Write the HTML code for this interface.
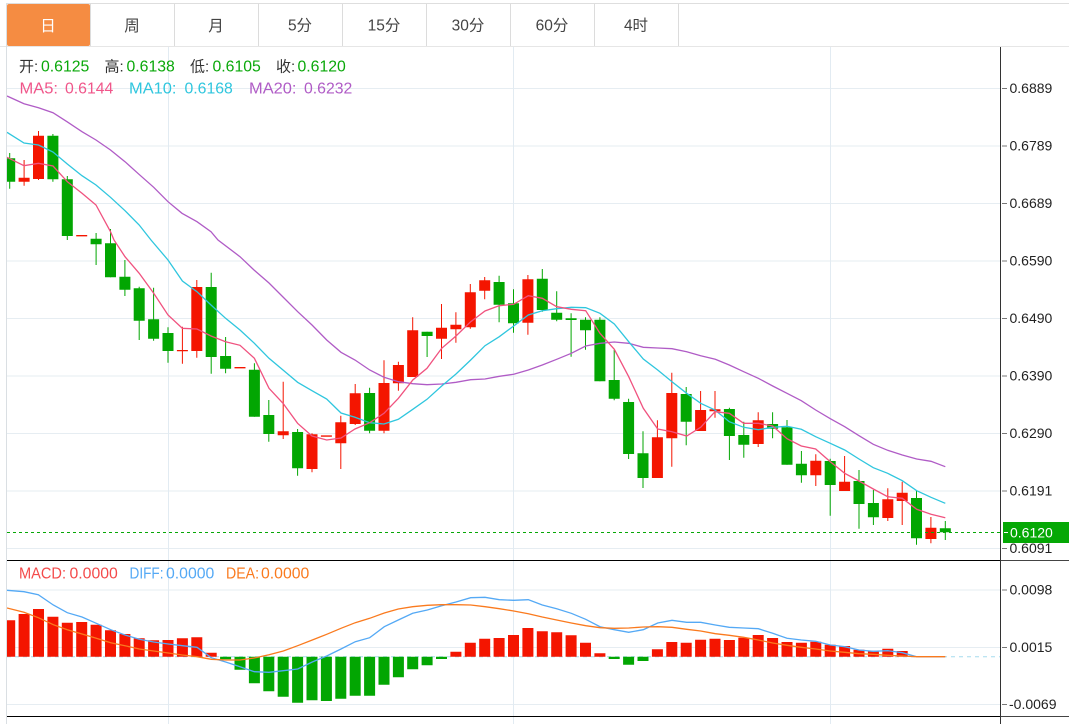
<!DOCTYPE html>
<html lang="zh"><head><meta charset="utf-8"><title>K线图</title>
<style>
html,body{margin:0;padding:0;background:#fff;width:1069px;height:724px;overflow:hidden}
svg{display:block;font-family:"Liberation Sans","Noto Sans CJK SC",sans-serif}
.tab{font-size:15.5px;fill:#444;text-anchor:middle}
.ax{font-size:14px;fill:#222}
.lg{font-size:15.8px}
</style></head><body>
<svg width="1069" height="724" viewBox="0 0 1069 724" xmlns="http://www.w3.org/2000/svg">
<defs><clipPath id="c"><rect x="7" y="47" width="993" height="677"/></clipPath></defs>
<!-- tabs -->
<path d="M6 3.5H1069" stroke="#dedede" fill="none"/>
<path d="M0 46.5H1069" stroke="#e6e6e6" fill="none"/>
<path d="M6.5 3V724" stroke="#dadfe3" fill="none"/>
<path d="M90.5 4V46M174.5 4V46M258.5 4V46M342.5 4V46M426.5 4V46M510.5 4V46M594.5 4V46M678.5 4V46" stroke="#dcdcdc" fill="none"/>
<rect x="7" y="4" width="83" height="42" rx="2" fill="#f58c42"/>
<text x="48" y="31" class="tab" style="fill:#fff">日</text>
<text x="132" y="31" class="tab">周</text>
<text x="216" y="31" class="tab">月</text>
<text x="300" y="30.5" class="tab">5分</text>
<text x="384" y="30.5" class="tab">15分</text>
<text x="468" y="30.5" class="tab">30分</text>
<text x="552" y="30.5" class="tab">60分</text>
<text x="636" y="30.5" class="tab">4时</text>
<!-- grid -->
<path d="M7 88.5H1000M7 146H1000M7 203.5H1000M7 261H1000M7 318.5H1000M7 376H1000M7 433.5H1000M7 491H1000M7 548.5H1000M7 590H1000M7 647.5H1000M7 704.5H1000" stroke="#e6edf2" fill="none"/>
<path d="M168.5 47V724M513.5 47V724M830.5 47V724" stroke="#e2ebf2" fill="none"/>
<path d="M7 656.7H1000" stroke="#a5dcee" stroke-dasharray="4 4" fill="none"/>
<g clip-path="url(#c)" fill="none">
<!-- candle wicks -->
<path stroke="#f41500" stroke-width="1" d="M24.1 160V185.7M38.5 131V180M182.4 326.7V363.7M196.8 280V357.7M283.2 381.7V439M312 433.3V472.3M340.8 415.7V469M355.2 384V425M384 360.3V433.3M398.4 361.7V390.7M412.7 317.3V377M441.5 304V359M455.9 312.3V342.7M470.3 284V328.7M484.7 277V299.3M527.9 275V334.7M657.4 420.3V478M671.8 372.7V466.7M700.6 391V431M715 391V417.7M758.2 412.3V447M815.8 454.3V486M844.6 456V491M887.8 488.3V521M902.2 481.7V525M930.9 517V543.3"/>
<path stroke="#02a602" stroke-width="1" d="M9.7 153V188.7M52.9 134V181.7M67.3 176V240M96.1 233V265M110.5 229V277.3M124.9 260V296M139.2 286.7V340M153.6 287.7V340.7M168 327.3V362.7M211.2 272.7V373.7M225.6 337V373.3M254.4 363.3V416.7M268.8 400V441.7M297.6 429V475.7M369.6 387.7V433.3M427.1 331.7V357M499.1 275.7V322.3M513.5 289.3V332.7M542.3 269V311.7M556.7 291.3V321.3M571.1 313.3V356.7M585.5 317.3V349.7M599.9 317.3V381.3M614.2 350V400.3M628.6 398.7V459M643 431.3V488M686.2 387V445.3M729.4 407.7V460M743.8 421.7V457.7M772.6 412.3V438.3M787 420V464.7M801.4 451V482.7M830.2 458.7V515.7M859 470V528.7M873.4 490V525M916.5 490V544.7M945.3 521V540"/>
<!-- candle bodies -->
<path stroke="#f41500" stroke-width="11" d="M24.1 177.7V181.7M38.5 135.7V179M81.7 235V236.4M182.4 350V351.3M196.8 287V351M240 367V368.4M283.2 431.3V435.3M312 434.3V469M326.4 435.4V436.8M340.8 422.3V443.3M355.2 393.3V424M384 383V430.7M398.4 365V383.3M412.7 330.3V377M441.5 327.7V338.7M455.9 324.7V329.3M470.3 292.3V327.3M484.7 280.3V290.7M527.9 279.3V322.7M657.4 437.3V478M671.8 393V438.3M700.6 410V431M715 409.3V411.3M758.2 420.3V444M815.8 460.7V475.3M844.6 481.7V491M887.8 499.3V518M902.2 492.7V501M930.9 527.7V539"/>
<path stroke="#02a602" stroke-width="11" d="M9.7 158.3V181.7M52.9 135.7V179.3M67.3 179.3V236M96.1 238.7V244.3M110.5 243.3V277.3M124.9 276.7V289.7M139.2 288.3V320.7M153.6 319.3V338.7M168 333V351M211.2 287V357M225.6 356V368.7M254.4 369.7V416.7M268.8 415V434M297.6 432V468.3M369.6 393V430.7M427.1 331.7V336M499.1 282V304.7M513.5 303.3V323.3M542.3 278.7V310M556.7 312.7V319.7M571.1 318.3V320M585.5 319.7V330.3M599.9 319.7V381.3M614.2 380V398.7M628.6 402V454M643 453.3V478M686.2 394V421.7M729.4 409V436M743.8 435V444.7M772.6 424V428.7M787 427.3V464.7M801.4 463.7V475.3M830.2 461V485M859 481V504M873.4 503V517.3M916.5 498V538.3M945.3 528.3V532.3"/>
<!-- MACD bars -->
<path stroke="#f41500" stroke-width="11" d="M9.7 656.7V620.3M24.1 656.7V614M38.5 656.7V609M52.9 656.7V616.7M67.3 656.7V622.7M81.7 656.7V622M96.1 656.7V624.7M110.5 656.7V630.3M124.9 656.7V634M139.2 656.7V638.3M153.6 656.7V640.3M168 656.7V640M182.4 656.7V638.3M196.8 656.7V637.3M211.2 656.7V652.7M455.9 656.7V651.7M470.3 656.7V642.7M484.7 656.7V638.7M499.1 656.7V638M513.5 656.7V635M527.9 656.7V628M542.3 656.7V631.3M556.7 656.7V632.3M571.1 656.7V635.3M585.5 656.7V642.7M599.9 656.7V653.3M657.4 656.7V649.3M671.8 656.7V642M686.2 656.7V642.7M700.6 656.7V639.7M715 656.7V638.8M729.4 656.7V640M743.8 656.7V637.7M758.2 656.7V635M772.6 656.7V638M787 656.7V642M801.4 656.7V642.7M815.8 656.7V641.7M830.2 656.7V644.7M844.6 656.7V646M859 656.7V649.7M873.4 656.7V650.7M887.8 656.7V648.7M902.2 656.7V651"/>
<path stroke="#02a602" stroke-width="11" d="M225.6 656.7V659.3M240 656.7V669.7M254.4 656.7V683.3M268.8 656.7V691.3M283.2 656.7V696.7M297.6 656.7V702.7M312 656.7V700.3M326.4 656.7V701M340.8 656.7V698.7M355.2 656.7V695.7M369.6 656.7V695.7M384 656.7V684.7M398.4 656.7V677.3M412.7 656.7V669.3M427.1 656.7V665.3M441.5 656.7V659M614.2 656.7V659M628.6 656.7V664.7M643 656.7V661"/>
<!-- MA20 -->
<polyline stroke="#b05cc6" stroke-width="1.3" points="7,96 24,103.7 38.5,107.7 53,112.7 67,121.7 82,131.7 96,140 110.5,150 125,161.7 139,174.3 153.7,187.3 168,201.7 182,213.3 197,221.7 211,231.7 218,240 240,256.7 254,270 269,283 283,297 297.7,311.7 312,325 326.7,340 341,352.3 355,360 369.7,370 384,377.3 398.4,381.7 412.8,383.7 427,384.7 441.7,384 456,382.3 470.7,379.7 485,379 499.3,376.3 513.7,374.3 528.3,370 542.3,365 556.7,359.3 571.3,353.3 585.7,346 600,343.3 614.3,342 628.7,343.3 643.3,347.3 657.7,348 672,348.7 686.7,351.7 700.7,355.7 715.3,359.3 729.3,365 743.7,371.7 758.3,378.3 772.7,386 787,393.3 801.3,400.7 815.7,410 830.3,418.7 844.7,426.7 859,435.7 873.3,444.3 887.7,450.3 902.3,455 916.7,459 931,461.3 945.3,466.7"/>
<!-- MA10 -->
<polyline stroke="#2fc6de" stroke-width="1.3" points="7,132.3 24,143 38.5,145 53,152 67.3,164 82,175.7 96,185 110.5,197.3 125,210.7 139.2,225 151,240 168,260 182.4,281 197,291.7 211,305 225.6,318.3 240,330 254.4,343.3 269,358.3 283,370 297.6,382.3 312,390.7 326.7,399 341,413 355,417.3 369.7,422.7 384,424 398.4,419.3 412.8,409.3 427,399.3 441.7,386 456,374 470.7,360 485,345.7 499.3,336.7 513.7,326 528.3,315 542.3,310.7 556.7,308.7 571.3,307.3 585.7,307.7 600,313.3 614.3,324 628.7,341.7 643.3,359 657.7,370 672,381.7 686.7,393.3 700.7,403.3 715,410 729.3,421.7 743.7,427.3 758.3,429.7 772.7,427.3 787,426.3 801.3,429.3 815.7,436.7 830.3,443.3 844.7,450 859,459 873.3,467.7 887.7,473.3 902.3,480.7 916.7,490.7 931,497.3 945.3,503.3"/>
<!-- MA5 -->
<polyline stroke="#f0527f" stroke-width="1.3" points="7,157.3 24,165.7 38.5,163.3 53,166 67.3,181.7 82,193.3 96,205 110.5,231.7 114,240 125,256.7 139.2,273.3 153.7,293.3 168,315 182.4,328.3 197,329 211,336 225.6,341.7 240,345.3 254.4,358.3 269,388.3 283,403.3 297.6,423.3 312,436 326.7,440 341,438 355,429 369.7,422.7 384,413.3 398.4,398.3 412.8,380 427,368.3 441.7,348.3 456,336 470.7,321.7 485,311 499.3,305.7 513.7,304.3 528.3,295.7 542.3,298.3 556.7,306.7 571.3,309.3 585.7,310.7 600,333.3 614.3,349.3 628.7,376.7 643.3,408.3 657.7,429 672,431.7 686.7,436 700.7,427.3 715,411.7 729.3,413.3 743.7,423.3 758.3,423.3 772.7,426 787,438.7 801.3,446 815.7,449 830.3,461.7 844.7,473.3 859,481 873.3,489 887.7,496.7 902.3,498.3 916.7,509.3 931,514.3 945.3,517.7"/>
<!-- DIFF -->
<polyline stroke="#54a9f5" stroke-width="1.3" points="7,590.3 24,591.7 38.3,594.7 53.3,605 67.3,612.7 82,617 96.3,623.3 110.7,629.7 125,635 139.3,639.3 153.7,642 168.3,644 182.3,645.7 197,647.3 211.3,657.7 225.7,662 240,666.7 254.3,671.7 269,672.3 283.3,670.7 297.7,669 312.3,662 326.7,656 341,649 355.3,641.7 369.7,637.7 384.3,626.7 398.3,620 412.7,613.3 427.3,610 441.7,605.7 456,602 470.7,597.7 485,597.3 499.3,599.7 513.7,600.3 528.3,599.7 542.3,605 556.7,608.7 571.3,613.3 585.7,619.3 600,626.7 614.3,629.7 628.7,632.3 643.3,629.7 657.7,623 672,620.3 686.7,622.3 700.7,622.3 715.3,625 729.3,627.3 743.7,628 758.3,628.7 772.7,633.3 787,638.3 801.3,640 815.7,641.3 830.3,645 844.7,646.7 859,650 873.3,651.3 887.7,650.7 902.3,652.7 916.7,656.7 945.3,656.7"/>
<!-- DEA -->
<polyline stroke="#fa7a1e" stroke-width="1.3" points="7,608 24,612.3 38.3,617.7 53.3,624.7 67.3,629.7 82,634 96.3,638.3 110.7,642.7 125,645.7 139.3,649 153.7,651 168.3,653 182.3,655 197,656.7 211.3,659.3 225.7,660 240,660 254.3,658 269,654.7 283.3,651 297.7,645.7 312.3,640 326.7,634.3 341,628.3 355.3,622.7 369.7,618.3 384.3,613 398.3,609 412.7,606.7 427.3,605.3 441.7,604.7 456,604.7 470.7,605 485,606.7 499.3,608.7 513.7,611 528.3,613.7 542.3,617 556.7,620 571.3,623 585.7,625.7 600,627.7 614.3,628.3 628.7,628 643.3,627 657.7,626.7 672,627.3 686.7,629.3 700.7,631 715.3,633.7 729.3,635.3 743.7,637.3 758.3,640 772.7,643 787,645.3 801.3,647.3 815.7,649 830.3,651 844.7,652.3 859,653.7 873.3,654.3 887.7,655.3 902.3,656 916.7,656.7 945.3,656.7"/>
</g>
<!-- current price line -->
<path d="M7 532.5H1000" stroke="#07a807" stroke-dasharray="3 3" fill="none"/>
<!-- panel lines -->
<path d="M7 560.5H1000M7 716.5H1000" stroke="#000" fill="none"/>
<path d="M1000 560.5H1069M1000 716.5H1069" stroke="#444" fill="none"/>
<path d="M1000.5 47V724" stroke="#333" fill="none"/>
<!-- ticks -->
<path d="M1002 88.5H1007M1002 146H1007M1002 203.5H1007M1002 261H1007M1002 318.5H1007M1002 376H1007M1002 433.5H1007M1002 491H1007M1002 548.5H1007M1002 590H1007M1002 647.5H1007M1002 704.5H1007" stroke="#777" fill="none"/>
<!-- price tag -->
<rect x="1003" y="522" width="66" height="21" fill="#05a805"/>
<path d="M1004 532.5H1008" stroke="#fff" fill="none"/>
<text x="1010" y="537.5" class="ax" style="fill:#fff">0.6120</text>
<!-- axis labels -->
<text x="1009.5" y="93" class="ax">0.6889</text>
<text x="1009.5" y="150.5" class="ax">0.6789</text>
<text x="1009.5" y="208" class="ax">0.6689</text>
<text x="1009.5" y="265.5" class="ax">0.6590</text>
<text x="1009.5" y="323" class="ax">0.6490</text>
<text x="1009.5" y="380.5" class="ax">0.6390</text>
<text x="1009.5" y="438" class="ax">0.6290</text>
<text x="1009.5" y="495.5" class="ax">0.6191</text>
<text x="1009.5" y="553" class="ax">0.6091</text>
<text x="1009.5" y="594.5" class="ax">0.0098</text>
<text x="1009.5" y="652" class="ax">0.0015</text>
<text x="1009" y="709" class="ax">-0.0069</text>
<!-- legends -->
<g class="lg">
<text x="19" y="71.5" fill="#333" style="font-size:15px">开:</text><text x="41" y="71.5" fill="#0aa80a">0.6125</text>
<text x="104.5" y="71.5" fill="#333" style="font-size:15px">高:</text><text x="126.5" y="71.5" fill="#0aa80a">0.6138</text>
<text x="190" y="71.5" fill="#333" style="font-size:15px">低:</text><text x="212.5" y="71.5" fill="#0aa80a">0.6105</text>
<text x="276" y="71.5" fill="#333" style="font-size:15px">收:</text><text x="297.5" y="71.5" fill="#0aa80a">0.6120</text>
<text x="19.5" y="93.5" fill="#f0568a" textLength="38.5" lengthAdjust="spacingAndGlyphs">MA5:</text><text x="65" y="93.5" fill="#f0568a">0.6144</text>
<text x="129" y="93.5" fill="#2fc6de" textLength="47.5" lengthAdjust="spacingAndGlyphs">MA10:</text><text x="184.5" y="93.5" fill="#2fc6de">0.6168</text>
<text x="249" y="93.5" fill="#b05cc6" textLength="47.5" lengthAdjust="spacingAndGlyphs">MA20:</text><text x="304" y="93.5" fill="#b05cc6">0.6232</text>
<text x="19" y="578.5" fill="#f44a4a" textLength="47" lengthAdjust="spacingAndGlyphs">MACD:</text><text x="69.5" y="578.5" fill="#f44a4a">0.0000</text>
<text x="129.5" y="578.5" fill="#54a9f5" textLength="34" lengthAdjust="spacingAndGlyphs">DIFF:</text><text x="166" y="578.5" fill="#54a9f5">0.0000</text>
<text x="226" y="578.5" fill="#fa7a1e" textLength="33" lengthAdjust="spacingAndGlyphs">DEA:</text><text x="261" y="578.5" fill="#fa7a1e">0.0000</text>
</g>
</svg>
</body></html>
